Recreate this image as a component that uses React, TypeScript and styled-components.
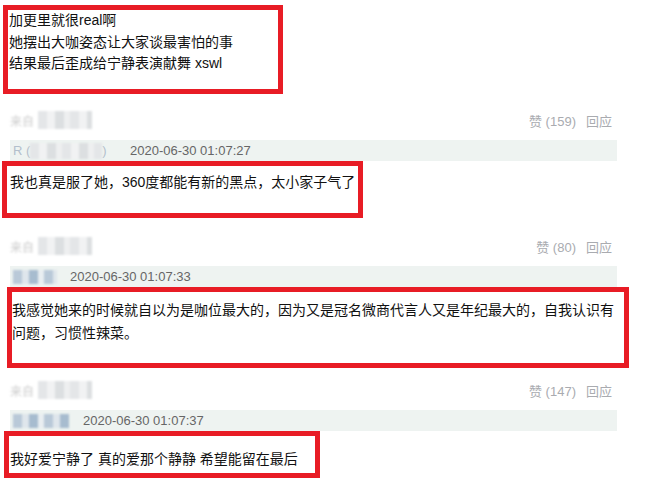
import React from 'react';
import styled, { createGlobalStyle } from 'styled-components';

const GlobalStyle = createGlobalStyle`
  body {
    margin: 0;
    background: #fff;
    font-family: "Liberation Sans", "Noto Sans CJK SC", sans-serif;
  }
`;

const Page = styled.div`
  box-sizing: border-box;
  width: 672px;
  height: 488px;
  padding-top: 5px;
  overflow: hidden;
`;

const Highlight = styled.div<{
  $w: number;
  $h: number;
  $ml: number;
  $pt: number;
  $pl: number;
  $pr?: number;
  $lh?: number;
}>`
  box-sizing: border-box;
  width: ${(p) => p.$w}px;
  height: ${(p) => p.$h}px;
  margin-left: ${(p) => p.$ml}px;
  padding: ${(p) => p.$pt}px ${(p) => p.$pr ?? 0}px 0 ${(p) => p.$pl}px;
  border: 5px solid #e81c25;
  font-size: 14px;
  line-height: ${(p) => p.$lh ?? 22}px;
  color: #111;
`;

const Meta = styled.div<{ $mt: number }>`
  width: 607px;
  margin: ${(p) => p.$mt}px 0 0 10px;
  font-size: 13px;
`;

const MetaHead = styled.div`
  display: flex;
  justify-content: space-between;
  align-items: center;
  height: 20px;
  padding-right: 5px;
`;

const Actions = styled.div`
  display: flex;
  gap: 10px;
  color: #a9abb0;
`;

const InfoBar = styled.div`
  display: flex;
  align-items: center;
  height: 21px;
  margin-top: 10px;
  background: #eef3f1;
  color: #666;
`;

const Author = styled.span<{ $w: number }>`
  display: flex;
  align-items: center;
  width: ${(p) => p.$w}px;
  padding-left: 3px;
  box-sizing: border-box;
  color: #b3bfcc;
`;

const Mosaic = styled.span<{ $w: number; $h?: number; $blue?: boolean }>`
  display: inline-block;
  width: ${(p) => p.$w}px;
  height: ${(p) => p.$h ?? 14}px;
  background: ${(p) =>
    p.$blue
      ? 'repeating-linear-gradient(90deg, #b9c9d8 0 9px, #dfe6ec 9px 16px, #a7bccf 16px 25px, #e9eef1 25px 31px)'
      : 'repeating-linear-gradient(90deg, #e4e6e8 0 9px, #f1f2f3 9px 17px, #dcdfe1 17px 26px, #eeeff0 26px 32px)'};
  filter: blur(1px);
`;

const Faint = styled.span`
  color: #ccc;
  font-size: 12px;
  filter: blur(0.8px);
  margin-right: 4px;
`;

const NameBlur = styled.span`
  display: flex;
  align-items: center;
`;

type Comment = {
  likes: number;
  time: string;
  authorW: number;
  author: React.ReactNode;
  mt: number;
};

function CommentMeta({ c }: { c: Comment }) {
  return (
    <Meta $mt={c.mt}>
      <MetaHead>
        <NameBlur>
          <Faint>来自</Faint>
          <Mosaic $w={54} $h={18} />
        </NameBlur>
        <Actions>
          <span>赞 ({c.likes})</span>
          <span>回应</span>
        </Actions>
      </MetaHead>
      <InfoBar>
        <Author $w={c.authorW}>{c.author}</Author>
        <span>{c.time}</span>
      </InfoBar>
    </Meta>
  );
}

const comments: Comment[] = [
  {
    likes: 159,
    time: '2020-06-30 01:07:27',
    authorW: 120,
    mt: 16,
    author: (
      <>
        R (<Mosaic $w={72} $h={16} />)
      </>
    ),
  },
  {
    likes: 80,
    time: '2020-06-30 01:07:33',
    authorW: 60,
    mt: 18,
    author: <Mosaic $w={44} $h={14} $blue />,
  },
  {
    likes: 147,
    time: '2020-06-30 01:07:37',
    authorW: 73,
    mt: 12,
    author: <Mosaic $w={56} $h={14} $blue />,
  },
];

export default function App() {
  return (
    <Page>
      <GlobalStyle />
      <Highlight $w={280} $h={89} $ml={3} $pt={0} $pl={1} $lh={21.5}>
        加更里就很real啊
        <br />
        她摆出大咖姿态让大家谈最害怕的事
        <br />
        结果最后歪成给宁静表演献舞 xswl
      </Highlight>

      <CommentMeta c={comments[0]} />
      <Highlight $w={361} $h={57} $ml={2} $pt={5} $pl={3}>
        我也真是服了她，360度都能有新的黑点，太小家子气了
      </Highlight>

      <CommentMeta c={comments[1]} />
      <Highlight $w={622} $h={81} $ml={7} $pt={7} $pl={0} $pr={2} $lh={23}>
        我感觉她来的时候就自以为是咖位最大的，因为又是冠名微商代言人又是年纪最大的，自我认识有问题，习惯性辣菜。
      </Highlight>

      <CommentMeta c={comments[2]} />
      <Highlight $w={316} $h={47} $ml={4} $pt={12} $pl={1}>
        我好爱宁静了 真的爱那个静静 希望能留在最后
      </Highlight>
    </Page>
  );
}
